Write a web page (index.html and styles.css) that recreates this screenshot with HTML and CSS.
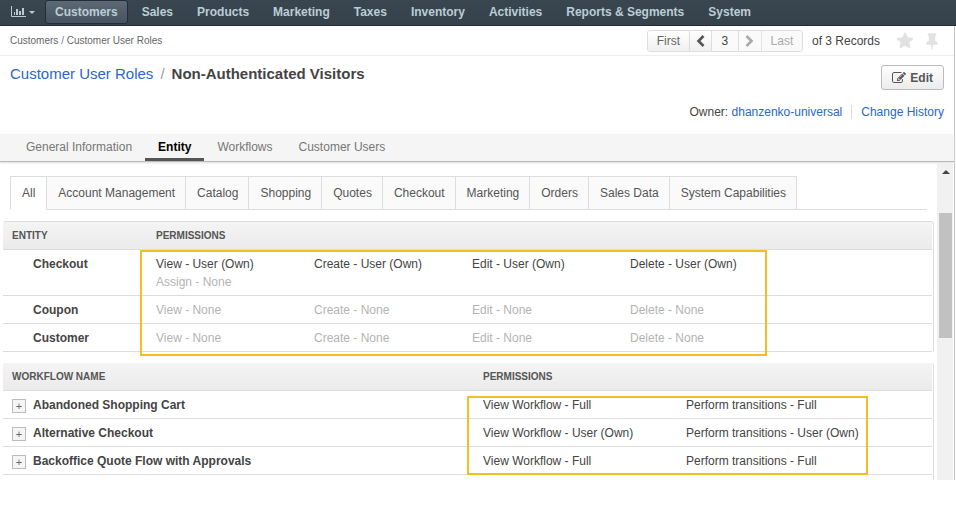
FILE: index.html
```html
<!DOCTYPE html>
<html lang="en">
<head>
<meta charset="utf-8">
<title>Non-Authenticated Visitors - Customer User Roles</title>
<link rel="stylesheet" href="styles.css">
</head>
<body>
<header class="topbar">
  <button class="dash" type="button" aria-label="Dashboards">
    <svg class="dash-chart" viewBox="0 0 15 12"><path d="M0.5 0V10.500H15" fill="none" stroke="currentColor"/><path d="M3 6h1v3H3zM5 3h2v6H5zM8 5h2v4H8zM11 2h2v7H11z"/></svg>
    <svg class="dash-caret" viewBox="0 0 6 3"><path d="M0 0h6L3 3z"/></svg>
  </button>
  <nav class="mainnav">
    <a class="mainnav-item mainnav-active" href="#">Customers</a>
    <a class="mainnav-item" href="#">Sales</a>
    <a class="mainnav-item" href="#">Products</a>
    <a class="mainnav-item" href="#">Marketing</a>
    <a class="mainnav-item" href="#">Taxes</a>
    <a class="mainnav-item" href="#">Inventory</a>
    <a class="mainnav-item" href="#">Activities</a>
    <a class="mainnav-item" href="#">Reports &amp; Segments</a>
    <a class="mainnav-item" href="#">System</a>
  </nav>
</header>
<main class="page">
  <div class="crumbbar">
    <nav class="crumbs"><a href="#">Customers</a> / <a href="#">Customer User Roles</a></nav>
    <div class="pager">
      <div class="pager-group">
        <button class="pager-btn pager-word" type="button">First</button>
        <button class="pager-btn pager-arrow" type="button" aria-label="Previous"><svg viewBox="0 0 8 12"><path d="M7 1L2 6l5 5" fill="none" stroke="currentColor" stroke-width="2.6"/></svg></button>
        <input class="pager-input" type="text" value="3" aria-label="Record number">
        <button class="pager-btn pager-arrow pager-off" type="button" aria-label="Next"><svg viewBox="0 0 8 12"><path d="M1 1l5 5-5 5" fill="none" stroke="currentColor" stroke-width="2.6"/></svg></button>
        <button class="pager-btn pager-word pager-off" type="button">Last</button>
      </div>
      <span>of 3 Records</span>
      <button class="mark" type="button" aria-label="Favorite"><svg viewBox="0 0 1792 1792"><path d="M1728 647q0 22-26 48l-363 354 86 500q1 7 1 20 0 21-10.500 35.500t-30.500 14.500q-19 0-40-12l-449-236-449 236q-22 12-40 12-21 0-31.500-14.500t-10.500-35.500q0-6 2-20l86-500-364-354q-25-27-25-48 0-37 56-46l502-73 225-455q19-41 49-41t49 41l225 455 502 73q56 9 56 46z"/></svg></button>
      <button class="mark" type="button" aria-label="Pin"><svg viewBox="0 0 1792 1792"><path d="M1472 1216q0 26-19 45t-45 19h-429l-51 483q-2 12-10.500 20.500t-20.500 8.500h-1q-27 0-32-27l-76-485h-404q-26 0-45-19t-19-45q0-123 78.500-221.500t177.500-98.500v-512q-52 0-90-38t-38-90 38-90 90-38h640q52 0 90 38t38 90-38 90-90 38v512q99 0 177.500 98.500t78.500 221.500z"/></svg></button>
    </div>
  </div>
  <div class="heading">
    <h1 class="title"><a href="#">Customer User Roles</a><span class="slash">/</span><b>Non-Authenticated Visitors</b></h1>
    <button class="edit" type="button"><svg viewBox="0 0 1792 1792"><path d="M888 1184l116-116-152-152-116 116v56h96v96h56zm440-720q-16-16-33 1l-350 350q-17 17-1 33t33-1l350-350q17-17 1-33zm80 594v190q0 119-84.500 203.500t-203.500 84.500h-832q-119 0-203.500-84.500t-84.500-203.500v-832q0-119 84.500-203.500t203.500-84.500h832q63 0 117 25 15 7 18 23 3 17-9 29l-49 49q-14 14-32 8-23-6-45-6h-832q-66 0-113 47t-47 113v832q0 66 47 113t113 47h832q66 0 113-47t47-113v-126q0-13 9-22l64-64q15-15 35-7t20 29zm-96-738l288 288-672 672h-288v-288zm444 132l-92 92-288-288 92-92q28-28 68-28t68 28l152 152q28 28 28 68t-28 68z"/></svg>Edit</button>
  </div>
  <div class="meta">
    <span class="owner">Owner: <a href="#">dhanzenko-universal</a></span>
    <a class="history" href="#">Change History</a>
  </div>
  <nav class="sections">
    <a class="section" href="#">General Information</a>
    <a class="section section-active" href="#">Entity</a>
    <a class="section" href="#">Workflows</a>
    <a class="section" href="#">Customer Users</a>
  </nav>
  <div class="body">
    <div class="content">
      <nav class="tabs">
        <a class="tab tab-active" href="#">All</a>
        <a class="tab" href="#">Account Management</a>
        <a class="tab" href="#">Catalog</a>
        <a class="tab" href="#">Shopping</a>
        <a class="tab" href="#">Quotes</a>
        <a class="tab" href="#">Checkout</a>
        <a class="tab" href="#">Marketing</a>
        <a class="tab" href="#">Orders</a>
        <a class="tab" href="#">Sales Data</a>
        <a class="tab" href="#">System Capabilities</a>
      </nav>
      <section class="grid grid-entity">
        <table>
          <thead><tr><th class="col-entity">Entity</th><th>Permissions</th></tr></thead>
          <tbody>
            <tr><td class="name">Checkout</td><td><ul class="perms"><li>View - User (Own)</li><li>Create - User (Own)</li><li>Edit - User (Own)</li><li>Delete - User (Own)</li><li class="none">Assign - None</li></ul></td></tr>
            <tr><td class="name">Coupon</td><td><ul class="perms none"><li>View - None</li><li>Create - None</li><li>Edit - None</li><li>Delete - None</li></ul></td></tr>
            <tr><td class="name">Customer</td><td><ul class="perms none"><li>View - None</li><li>Create - None</li><li>Edit - None</li><li>Delete - None</li></ul></td></tr>
          </tbody>
        </table>
        <div class="frame frame-entity"></div>
      </section>
      <section class="grid grid-workflow">
        <table>
          <thead><tr><th class="col-workflow">Workflow name</th><th>Permissions</th></tr></thead>
          <tbody>
            <tr><td><div class="flow"><button class="expand" type="button" aria-label="Expand">+</button>Abandoned Shopping Cart</div></td><td><ul class="perms perms-wide"><li>View Workflow - Full</li><li>Perform transitions - Full</li></ul></td></tr>
            <tr><td><div class="flow"><button class="expand" type="button" aria-label="Expand">+</button>Alternative Checkout</div></td><td><ul class="perms perms-wide"><li>View Workflow - User (Own)</li><li>Perform transitions - User (Own)</li></ul></td></tr>
            <tr><td><div class="flow"><button class="expand" type="button" aria-label="Expand">+</button>Backoffice Quote Flow with Approvals</div></td><td><ul class="perms perms-wide"><li>View Workflow - Full</li><li>Perform transitions - Full</li></ul></td></tr>
          </tbody>
        </table>
        <div class="frame frame-workflow"></div>
      </section>
    </div>
    <div class="scroll">
      <svg class="scroll-up" viewBox="0 0 8 4"><path d="M0 4L4 0l4 4z"/></svg>
      <div class="scroll-thumb"></div>
    </div>
  </div>
</main>
</body>
</html>
```
FILE: styles.css
```css
* { box-sizing: border-box; }
body { margin: 0; background: #fff; color: #444; font: 12px/18px "Liberation Sans", Arial, sans-serif; }
a { color: #2a67c9; text-decoration: none; }
button, input { font: inherit; color: inherit; margin: 0; padding: 0; border: 0; background: none; }
svg { display: block; fill: currentColor; }

.topbar { display: flex; align-items: flex-start; height: 26px; background: linear-gradient(#39464f, #36424b); border-bottom: 1px solid #1f2a33; }
.dash { display: flex; align-items: center; gap: 3px; height: 24px; padding-left: 11px; width: 45px; color: #b8cad3; }
.dash-chart { width: 15px; height: 12px; }
.dash-caret { width: 6px; height: 3px; }
.mainnav { display: flex; gap: 4px; }
.mainnav-item { height: 24px; padding: 0 9px; border: 1px solid transparent; border-radius: 3px; color: #bccdd6; font-weight: bold; line-height: 22px; white-space: nowrap; }
.mainnav-active { background: linear-gradient(#5d6a76, #46525d); border-color: #222d37; }

.page { margin-right: 1px; border-right: 1px solid #c4c4c4; }
.crumbbar { display: flex; justify-content: space-between; align-items: center; height: 30px; padding: 0 13px 0 10px; border-bottom: 1px solid #eee; }
.crumbs { font-size: 10px; color: #777; }
.crumbs a { color: #666; }
.pager { display: flex; align-items: center; }
.pager-group { display: flex; margin-right: 9px; height: 22px; border: 1px solid #ddd; border-radius: 3px; overflow: hidden; }
.pager-btn { display: flex; align-items: center; justify-content: center; background: linear-gradient(#fff, #f0f0f0); color: #666; }
.pager-word { width: 41px; }
.pager-arrow { width: 22px; border-left: 1px solid #ddd; color: #555; }
.pager-arrow svg { width: 9px; height: 12px; }
.pager-input { width: 28px; border: solid #ddd; border-width: 0 1px; text-align: center; background: #fafafa; }
.pager-off { color: #aaa; background: #fafafa; border-left: 0; }
.pager-off + .pager-off { border-left: 1px solid #e3e3e3; }
.mark { width: 18px; height: 18px; color: #e2e2e2; margin-left: 9px; }
.mark svg { width: 18px; height: 18px; }
.mark:first-of-type { margin-left: 16px; }

.heading { display: flex; justify-content: space-between; align-items: flex-start; padding: 9px 10px 0; height: 46px; }
.title { margin: 0; font-size: 15px; line-height: 18px; font-weight: normal; }
.slash { color: #999; padding: 0 7px; }
.edit { display: flex; align-items: center; gap: 4px; height: 25px; padding: 0 10px; border: 1px solid #bbb; border-radius: 3px; background: linear-gradient(#fefefe, #ececec); color: #555; font-weight: bold; }
.edit svg { width: 14px; height: 14px; }
.meta { display: flex; justify-content: flex-end; align-items: center; padding: 1px 10px 13px; }
.history { margin-left: 9px; border-left: 1px solid #ddd; padding-left: 9px; line-height: 14px; }

.sections { display: flex; padding-left: 13px; height: 28px; background: #f5f5f5; border-bottom: 1px solid #b9b9b9; box-shadow: 0 1px 2px #ddd; }
.section { padding: 0 13px; line-height: 27px; color: #777; }
.section-active { color: #000; font-weight: bold; border-bottom: 3px solid #555; }

.body { display: flex; padding-right: 1px; }
.content { flex: 1; min-width: 0; padding: 14px 3px 0; }
.tabs { display: flex; margin: 0 7px 11px; border-bottom: 1px solid #ddd; }
.tab { margin: 0 0 -1px -1px; padding: 7px 10px 7px 11px; border: 1px solid #ddd; background: #fafafa; color: #555; white-space: nowrap; }
.tab-active { margin-left: 0; padding-right: 11px; background: #fff; border-bottom-color: #fff; }

.grid { position: relative; padding-right: 1px; border-right: 1px solid #ddd; border-radius: 3px 3px 0 0; }
.grid-entity { border-top: 1px solid #ddd; margin-bottom: 11px; }
.grid-workflow { padding-bottom: 5px; }
table { width: 100%; border-collapse: separate; border-spacing: 0; table-layout: fixed; }
th { padding: 5px 9px 4px; background: linear-gradient(#f4f4f4, #ebebeb); border-bottom: 1px solid #ddd; color: #555; font-size: 10px; text-align: left; text-transform: uppercase; }
td { padding: 5px 9px 4px; border-bottom: 1px solid #ddd; vertical-align: top; }
.col-entity { width: 144px; }
.col-workflow { width: 471px; }
.name { padding-left: 30px; font-weight: bold; }
.perms { display: flex; flex-wrap: wrap; margin: 0; padding: 0; list-style: none; }
.perms li { width: 158px; }
.perms-wide li { width: 203px; }
.none { color: #b3b3b3; }
.flow { display: flex; font-weight: bold; }
.expand { width: 14px; height: 14px; margin: 3px 7px 0 0; border: 1px solid #bbb; background: #f5f5f5; color: #666; font-size: 11px; font-weight: normal; line-height: 11px; }
.frame { position: absolute; border: 2px solid #f6bd22; pointer-events: none; }
.frame-entity { left: 137px; width: 627px; top: 28px; bottom: -4px; }
.frame-workflow { left: 464px; width: 401px; top: 33px; bottom: 5px; }

.scroll { display: flex; flex-direction: column; align-items: center; width: 16px; padding: 7px 0 0 1px; margin-top: 1px; background: #f1f1f1; color: #444; }
.scroll-up { width: 8px; height: 4px; margin-bottom: 39px; }
.scroll-thumb { width: 13px; height: 125px; background: #c1c1c1; }
```
